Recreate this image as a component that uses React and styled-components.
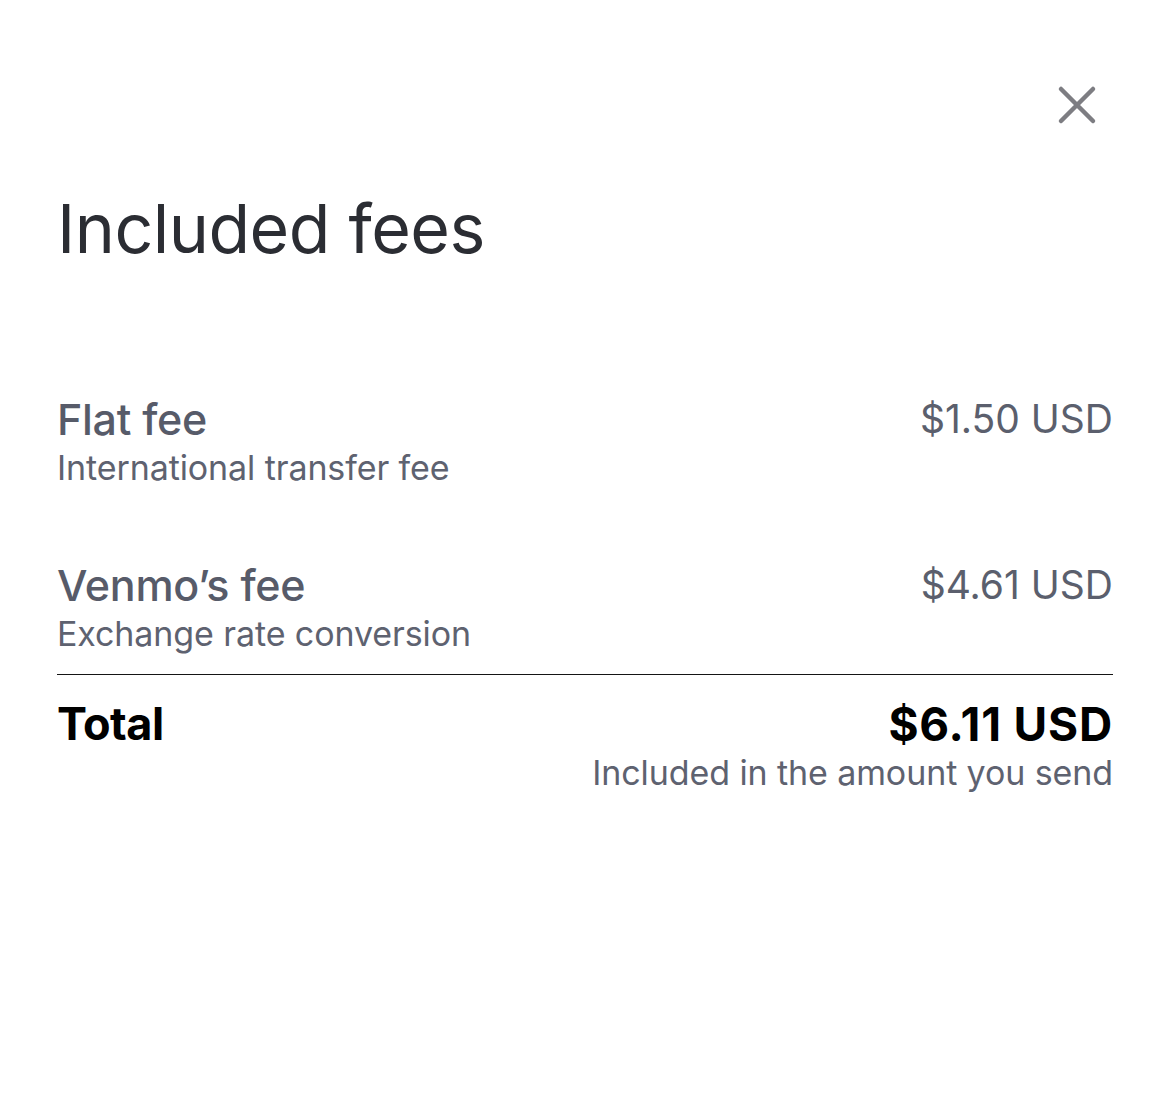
import React from "react";
import styled, { createGlobalStyle } from "styled-components";

const GlobalStyle = createGlobalStyle`
  html, body {
    margin: 0;
    padding: 0;
    background: #ffffff;
  }
  body {
    font-family: Inter, "Noto Sans", "Liberation Sans", sans-serif;
    -webkit-font-smoothing: antialiased;
  }
`;

const Sheet = styled.div`
  width: 1170px;
  min-height: 1116px;
  box-sizing: border-box;
  padding: 0 57px;
  background: #fff;
`;

const TopBar = styled.div`
  display: flex;
  justify-content: flex-end;
  padding-top: 84px;
  padding-right: 15px;
`;

const CloseButton = styled.button`
  width: 42px;
  height: 42px;
  padding: 0;
  border: none;
  background: none;
  cursor: pointer;
  display: flex;
  align-items: center;
  justify-content: center;
`;

const Title = styled.h1`
  margin: 62px 0 0;
  font-size: 68px;
  line-height: 80px;
  font-weight: 400;
  letter-spacing: -0.5px;
  color: #2b2d33;
`;

const FeeList = styled.div`
  margin-top: 126px;
  display: flex;
  flex-direction: column;
  gap: 68px;
`;

const FeeRow = styled.div`
  display: flex;
  justify-content: space-between;
  align-items: flex-start;
`;

const Left = styled.div`
  display: flex;
  flex-direction: column;
`;

const Right = styled.div`
  display: flex;
  flex-direction: column;
  align-items: flex-end;
  text-align: right;
`;

const Label = styled.div`
  font-size: ${(p) => (p.$strong ? "45px" : "43px")};
  line-height: 50px;
  font-weight: ${(p) => (p.$strong ? 700 : 500)};
  color: ${(p) => (p.$strong ? "#000" : "#575b69")};
  letter-spacing: ${(p) => (p.$strong ? "-0.5px" : "-0.3px")};
`;

const Amount = styled.div`
  font-size: ${(p) => (p.$strong ? "46px" : "39px")};
  line-height: 50px;
  font-weight: ${(p) => (p.$strong ? 700 : 400)};
  color: ${(p) => (p.$strong ? "#000" : "#5b5f6d")};
  letter-spacing: ${(p) => (p.$strong ? "0.8px" : "0")};
`;

const Sub = styled.div`
  font-size: 34px;
  line-height: 48px;
  font-weight: 400;
  color: #5e6270;
  letter-spacing: -0.1px;
`;

const TotalNote = styled(Sub)`
  margin-top: 0;
`;

const Divider = styled.hr`
  margin: 16px 0 24px;
  border: none;
  border-top: 1.5px solid #151515;
`;

const fees = [
  { label: "Flat fee", sub: "International transfer fee", amount: "$1.50 USD" },
  { label: "Venmo\u2019s fee", sub: "Exchange rate conversion", amount: "$4.61 USD" },
];

function CloseIcon() {
  return (
    <svg width="40" height="40" viewBox="0 0 40 40" fill="none">
      <path
        d="M4 4 L36 36 M36 4 L4 36"
        stroke="#7d7d82"
        strokeWidth="4.5"
        strokeLinecap="round"
      />
    </svg>
  );
}

export default function App() {
  return (
    <>
      <GlobalStyle />
      <Sheet>
        <TopBar>
          <CloseButton aria-label="Close">
            <CloseIcon />
          </CloseButton>
        </TopBar>
        <Title>Included fees</Title>
        <FeeList>
          {fees.map((f) => (
            <FeeRow key={f.label}>
              <Left>
                <Label>{f.label}</Label>
                <Sub>{f.sub}</Sub>
              </Left>
              <Amount>{f.amount}</Amount>
            </FeeRow>
          ))}
        </FeeList>
        <Divider />
        <FeeRow>
          <Label $strong>Total</Label>
          <Right>
            <Amount $strong>$6.11 USD</Amount>
            <TotalNote>Included in the amount you send</TotalNote>
          </Right>
        </FeeRow>
      </Sheet>
    </>
  );
}
